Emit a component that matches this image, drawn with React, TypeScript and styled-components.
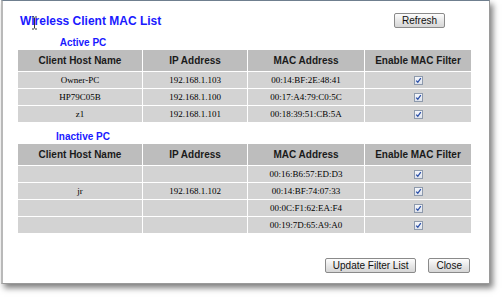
import React from "react";
import styled, { createGlobalStyle } from "styled-components";

const Global = createGlobalStyle`
  html, body { margin: 0; padding: 0; background: #ffffff; }
  body { width: 503px; height: 297px; overflow: hidden; }
`;

const Window = styled.div`
  position: relative;
  box-sizing: border-box;
  margin-left: 1px;
  width: 489px;
  height: 284px;
  background: #ffffff;
  border-left: 2px solid #b9b9b9;
  border-top: 1px solid #6f7f8f;
  border-right: 1px solid #9a9a9a;
  border-bottom: 1px solid #9a9a9a;
  box-shadow: 3px 4px 6px rgba(0, 0, 0, 0.5);
  padding-top: 12px;
  display: flex;
  flex-direction: column;
`;

const Header = styled.div`
  display: flex;
  justify-content: space-between;
  align-items: flex-start;
  padding: 0 44px 0 17px;
`;

const Title = styled.h1`
  margin: 0;
  font-family: "Liberation Sans", Arial, sans-serif;
  font-size: 12px;
  line-height: 16px;
  font-weight: bold;
  color: #1a1aff;
`;

const Button = styled.button`
  height: 15px;
  padding: 0 7px;
  font-family: "Liberation Sans", Arial, sans-serif;
  font-size: 10px;
  line-height: 13px;
  color: #111;
  border: 1px solid #8a8a8a;
  border-radius: 2px;
  background: linear-gradient(#fdfdfd, #e6e6e6 55%, #d6d6d6);
  cursor: default;
`;

const SectionLabel = styled.div<{ $top: number }>`
  width: 124px;
  margin: ${(p) => p.$top}px 0 0 18px;
  text-align: center;
  font-family: "Liberation Sans", Arial, sans-serif;
  font-size: 10px;
  line-height: 12px;
  font-weight: bold;
  color: #1a1aff;
`;

const Table = styled.table`
  margin-left: 14px;
  width: 455px;
  table-layout: fixed;
  border-collapse: separate;
  border-spacing: 1px;
`;

const HeadCell = styled.th`
  height: 21px;
  padding: 0;
  background: #bdbdbd;
  font-family: "Liberation Sans", Arial, sans-serif;
  font-size: 10px;
  font-weight: bold;
  color: #1a1a1a;
  text-align: center;
  vertical-align: middle;
`;

const Cell = styled.td`
  height: 16px;
  padding: 0;
  background: #d3d3d3;
  font-family: "Liberation Serif", "Times New Roman", serif;
  font-size: 9px;
  color: #000;
  text-align: center;
  vertical-align: middle;
  line-height: 10px;
`;

const Box = styled.span`
  display: inline-block;
  box-sizing: border-box;
  width: 9px;
  height: 9px;
  border: 1px solid #8e9aac;
  background: linear-gradient(#f4f6fa, #dfe3ec);
  vertical-align: middle;
  position: relative;
`;

const Footer = styled.div`
  display: flex;
  justify-content: flex-end;
  gap: 12px;
  margin-top: 24px;
  padding-right: 19px;
`;

const Cursor = styled.svg`
  position: absolute;
  left: 28px;
  top: 15px;
`;

const Check = () => (
  <Box>
    <svg width="7" height="7" viewBox="0 0 7 7" style={{ position: "absolute", left: 0, top: 0 }}>
      <path d="M1.2 3.6 L2.8 5.3 L5.8 1.2" fill="none" stroke="#2a4fa8" strokeWidth="1.3" />
    </svg>
  </Box>
);

type Row = { name: string; ip: string; mac: string };

const active: Row[] = [
  { name: "Owner-PC", ip: "192.168.1.103", mac: "00:14:BF:2E:48:41" },
  { name: "HP79C05B", ip: "192.168.1.100", mac: "00:17:A4:79:C0:5C" },
  { name: "z1", ip: "192.168.1.101", mac: "00:18:39:51:CB:5A" },
];

const inactive: Row[] = [
  { name: "", ip: "", mac: "00:16:B6:57:ED:D3" },
  { name: "jr", ip: "192.168.1.102", mac: "00:14:BF:74:07:33" },
  { name: "", ip: "", mac: "00:0C:F1:62:EA:F4" },
  { name: "", ip: "", mac: "00:19:7D:65:A9:A0" },
];

const ClientTable = ({ rows }: { rows: Row[] }) => (
  <Table>
    <colgroup>
      <col style={{ width: 124 }} />
      <col style={{ width: 104 }} />
      <col style={{ width: 116 }} />
      <col style={{ width: 106 }} />
    </colgroup>
    <thead>
      <tr>
        <HeadCell>Client Host Name</HeadCell>
        <HeadCell>IP Address</HeadCell>
        <HeadCell>MAC Address</HeadCell>
        <HeadCell>Enable MAC Filter</HeadCell>
      </tr>
    </thead>
    <tbody>
      {rows.map((r, i) => (
        <tr key={i}>
          <Cell>{r.name}</Cell>
          <Cell>{r.ip}</Cell>
          <Cell>{r.mac}</Cell>
          <Cell>
            <Check />
          </Cell>
        </tr>
      ))}
    </tbody>
  </Table>
);

export default function App() {
  return (
    <>
      <Global />
      <Window>
        <Header>
          <Title>Wireless Client MAC List</Title>
          <Button>Refresh</Button>
        </Header>
        <SectionLabel $top={8}>Active PC</SectionLabel>
        <ClientTable rows={active} />
        <SectionLabel $top={8}>Inactive PC</SectionLabel>
        <ClientTable rows={inactive} />
        <Footer>
          <Button>Update Filter List</Button>
          <Button>Close</Button>
        </Footer>
        <Cursor width="7" height="14" viewBox="0 0 7 14">
          <path d="M1 1 H3 M4 1 H6 M3.5 1.5 V12.5 M1 13 H3 M4 13 H6" stroke="#333" strokeWidth="1" fill="none" />
        </Cursor>
      </Window>
    </>
  );
}
